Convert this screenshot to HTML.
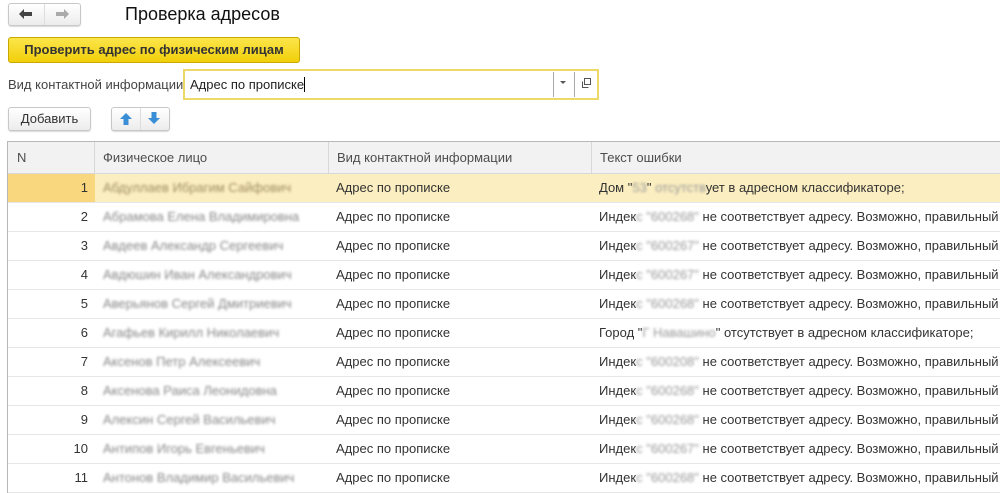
<!DOCTYPE html>
<html><head><meta charset="utf-8"><style>
*{box-sizing:border-box;margin:0;padding:0}
body{width:1000px;height:487px;overflow:hidden;background:#fff;font-family:"Liberation Sans",Arial,sans-serif;font-size:13px;color:#333;position:relative}
.abs{position:absolute}
.btn{position:absolute;border:1px solid #c8c8c8;border-radius:3px;background:linear-gradient(#fff,#ececec);box-shadow:0 1px 1px rgba(0,0,0,.15)}
.tbl{position:absolute;left:7px;top:141px;width:1000px;border-left:1px solid #b8b8b8;border-top:1px solid #b8b8b8}
.hdr{height:32px;background:#f2f2f2;border-bottom:1px solid #d8d8d8;position:relative;color:#4d4d4d}
.row{height:29px;border-bottom:1px solid #e6e6e6;position:relative}
.row.sel{background:#fbeec0}
.c{position:absolute;top:0;height:100%;line-height:28px;white-space:nowrap}
.n{left:0;width:80px;text-align:right}
.nm{left:95px;color:#888;filter:blur(1.3px)}
.sel .nm{color:#a08c60}
.v{left:328px}
.t{left:591px}
.b{filter:blur(1.3px);color:#999}
.sel .n{background:#f9d77e;width:87px;padding-right:7px}
.hdr .c{line-height:31px}
.vl{position:absolute;top:0;width:1px;height:100%;background:#d8d8d8}
</style></head><body>
<div class="btn" style="left:8px;top:3px;width:73px;height:23px"></div>
<div class="abs" style="left:44px;top:4px;width:1px;height:21px;background:#ddd"></div>
<svg class="abs" style="left:18px;top:8px" width="16" height="12"><path d="M1 6 L6 1 V4 H14 V8 H6 V11 Z" fill="#444"/></svg>
<svg class="abs" style="left:54px;top:8px" width="16" height="12"><path d="M15 6 L10 1 V4 H2 V8 H10 V11 Z" fill="#aaa"/></svg>
<div class="abs" style="left:125px;top:4px;font-size:18px;color:#111">Проверка адресов</div>
<div class="abs" style="left:8px;top:37px;width:292px;height:26px;border:1px solid #c9a800;border-radius:3px;background:linear-gradient(#fbe54a,#f2cf0a);font-weight:bold;font-size:13px;color:#333;text-align:center;line-height:24px">Проверить адрес по физическим лицам</div>
<div class="abs" style="left:8px;top:77px;color:#444">Вид контактной информации:</div>
<div class="abs" style="left:183px;top:69px;width:416px;height:31px;border:2px solid #ecd96a;background:#fff"></div>
<div class="abs" style="left:190px;top:77px;color:#222">Адрес по прописке<span style="display:inline-block;width:1px;height:15px;background:#000;vertical-align:-3px"></span></div>
<div class="abs" style="left:553px;top:72px;width:1px;height:25px;background:#aaa"></div>
<div class="abs" style="left:574px;top:72px;width:1px;height:25px;background:#aaa"></div>
<svg class="abs" style="left:560px;top:81px" width="7" height="4"><path d="M0 0H6L3 3Z" fill="#555"/></svg>
<svg class="abs" style="left:580px;top:77px" width="12" height="12"><rect x="4.5" y="1.5" width="6" height="6" fill="none" stroke="#555"/><path d="M2.5 4.5V10.5H8.5" fill="none" stroke="#555"/></svg>
<div class="btn" style="left:8px;top:107px;width:83px;height:24px;text-align:center;line-height:22px;color:#333">Добавить</div>
<div class="btn" style="left:111px;top:107px;width:59px;height:24px"></div>
<div class="abs" style="left:140px;top:108px;width:1px;height:22px;background:#ddd"></div>
<svg class="abs" style="left:119px;top:112px" width="14" height="14"><path d="M7 1 L13 7 H9.5 V13 H4.5 V7 H1 Z" fill="#3a8ed6"/></svg>
<svg class="abs" style="left:147px;top:111px" width="14" height="14"><path d="M7 13 L13 7 H9.5 V1 H4.5 V7 H1 Z" fill="#3a8ed6"/></svg>
<div class="tbl">
<div class="hdr"><div class="c" style="left:9px">N</div><div class="vl" style="left:86px"></div><div class="c" style="left:95px">Физическое лицо</div><div class="vl" style="left:320px"></div><div class="c" style="left:329px">Вид контактной информации</div><div class="vl" style="left:583px"></div><div class="c" style="left:592px">Текст ошибки</div></div>
<div class="row sel"><div class="c n">1</div><div class="c nm">Абдуллаев Ибрагим Сайфович</div><div class="c v">Адрес по прописке</div><div class="c t">Дом "<span class="b">53</span>" <span class="b">отсутств</span>ует в адресном классификаторе;</div></div>
<div class="row"><div class="c n">2</div><div class="c nm">Абрамова Елена Владимировна</div><div class="c v">Адрес по прописке</div><div class="c t">Индек<span class="b">с "600268"</span> не соответствует адресу. Возможно, правильный</div></div>
<div class="row"><div class="c n">3</div><div class="c nm">Авдеев Александр Сергеевич</div><div class="c v">Адрес по прописке</div><div class="c t">Индек<span class="b">с "600267"</span> не соответствует адресу. Возможно, правильный</div></div>
<div class="row"><div class="c n">4</div><div class="c nm">Авдюшин Иван Александрович</div><div class="c v">Адрес по прописке</div><div class="c t">Индек<span class="b">с "600267"</span> не соответствует адресу. Возможно, правильный</div></div>
<div class="row"><div class="c n">5</div><div class="c nm">Аверьянов Сергей Дмитриевич</div><div class="c v">Адрес по прописке</div><div class="c t">Индек<span class="b">с "600268"</span> не соответствует адресу. Возможно, правильный</div></div>
<div class="row"><div class="c n">6</div><div class="c nm">Агафьев Кирилл Николаевич</div><div class="c v">Адрес по прописке</div><div class="c t">Город "<span class="b">Г Навашино</span>" отсутствует в адресном классификаторе;</div></div>
<div class="row"><div class="c n">7</div><div class="c nm">Аксенов Петр Алексеевич</div><div class="c v">Адрес по прописке</div><div class="c t">Индек<span class="b">с "600208"</span> не соответствует адресу. Возможно, правильный</div></div>
<div class="row"><div class="c n">8</div><div class="c nm">Аксенова Раиса Леонидовна</div><div class="c v">Адрес по прописке</div><div class="c t">Индек<span class="b">с "600268"</span> не соответствует адресу. Возможно, правильный</div></div>
<div class="row"><div class="c n">9</div><div class="c nm">Алексин Сергей Васильевич</div><div class="c v">Адрес по прописке</div><div class="c t">Индек<span class="b">с "600268"</span> не соответствует адресу. Возможно, правильный</div></div>
<div class="row"><div class="c n">10</div><div class="c nm">Антипов Игорь Евгеньевич</div><div class="c v">Адрес по прописке</div><div class="c t">Индек<span class="b">с "600267"</span> не соответствует адресу. Возможно, правильный</div></div>
<div class="row"><div class="c n">11</div><div class="c nm">Антонов Владимир Васильевич</div><div class="c v">Адрес по прописке</div><div class="c t">Индек<span class="b">с "600268"</span> не соответствует адресу. Возможно, правильный</div></div>
</div>
</body></html>
